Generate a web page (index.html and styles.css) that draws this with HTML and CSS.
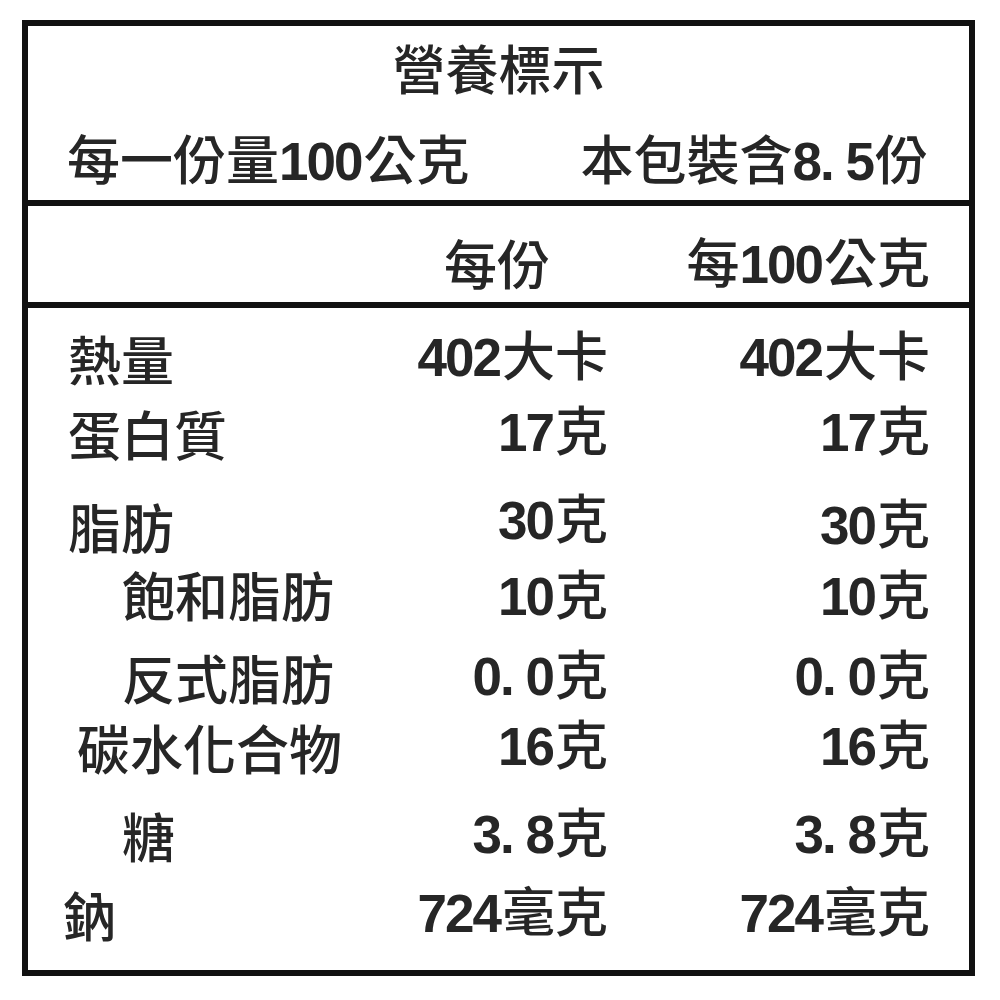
FILE: index.html
```html
<!DOCTYPE html>
<html lang="zh-Hant">
<head>
<meta charset="utf-8">
<title>營養標示</title>
<link rel="stylesheet" href="styles.css">
</head>
<body>
<div class="label">
  <section class="top">
    <div class="title">營養標示</div>
    <div class="serving">
      <span>每一份量<span class="num">100</span>公克</span>
      <span>本包裝含<span class="num">8. 5</span>份</span>
    </div>
  </section>
  <section class="head">
    <span></span>
    <span class="h2">每份</span>
    <span class="h3">每<span class="num">100</span>公克</span>
  </section>
  <section class="rows">
    <span class="name">熱量</span><span class="v"><span class="num">402</span>大卡</span><span class="v"><span class="num">402</span>大卡</span>
    <span class="name">蛋白質</span><span class="v"><span class="num">17</span>克</span><span class="v"><span class="num">17</span>克</span>
    <span class="name">脂肪</span><span class="v up"><span class="num">30</span>克</span><span class="v"><span class="num">30</span>克</span>
    <span class="name sub">飽和脂肪</span><span class="v down"><span class="num">10</span>克</span><span class="v down"><span class="num">10</span>克</span>
    <span class="name sub">反式脂肪</span><span class="v"><span class="num">0. 0</span>克</span><span class="v"><span class="num">0. 0</span>克</span>
    <span class="name carb">碳水化合物</span><span class="v"><span class="num">16</span>克</span><span class="v"><span class="num">16</span>克</span>
    <span class="name sub">糖</span><span class="v"><span class="num">3. 8</span>克</span><span class="v"><span class="num">3. 8</span>克</span>
    <span class="name na">鈉</span><span class="v"><span class="num">724</span>毫克</span><span class="v"><span class="num">724</span>毫克</span>
  </section>
</div>
</body>
</html>
```

FILE: styles.css
```css
html, body {
  margin: 0;
  padding: 0;
  background: #ffffff;
}

body {
  padding: 20px 25px 24px 22px;
  font-family: "Noto Sans CJK TC", "Noto Sans CJK SC", sans-serif;
  font-weight: 500;
  font-size: 53px;
  color: #262626;
}

.label {
  width: 941px;
  height: 944px;
  border: 6px solid #111111;
  display: flex;
  flex-direction: column;
}

.num {
  font-family: "Liberation Sans", "Noto Sans", sans-serif;
  font-weight: 700;
  letter-spacing: -2px;
  margin-right: 2px;
}

.top {
  height: 174px;
  border-bottom: 6px solid #111111;
  display: flex;
  flex-direction: column;
}

.title {
  text-align: center;
  line-height: 60px;
  margin-top: 11px;
}

.serving {
  display: flex;
  justify-content: space-between;
  padding: 0 41px 0 39px;
  line-height: 60px;
  margin-top: 30px;
}

.head {
  height: 96px;
  border-bottom: 6px solid #111111;
  display: grid;
  grid-template-columns: 1fr 220px 322px;
  padding: 0 39px 0 40px;
  align-items: center;
  line-height: 60px;
}

.head .h2 {
  text-align: right;
  padding-right: 58px;
  padding-top: 16px;
}

.head .h3 {
  text-align: right;
  padding-top: 16px;
}

.rows {
  flex: 1;
  display: grid;
  grid-template-columns: 1fr 220px 322px;
  grid-template-rows: 75px 93px 68px 83px 70px 88px 79px 56px;
  padding: 22px 39px 0 40px;
  line-height: 56px;
  align-items: start;
}

.rows .v {
  text-align: right;
  font-family: "Liberation Sans", "Noto Sans CJK TC", "Noto Sans CJK SC", sans-serif;
}

.rows .up {
  margin-top: -5px;
}

.rows .down {
  margin-top: 3px;
}

.rows .sub {
  padding-left: 54px;
}

.rows .carb {
  padding-left: 9px;
}

.rows .na {
  margin-left: -5px;
}
```
